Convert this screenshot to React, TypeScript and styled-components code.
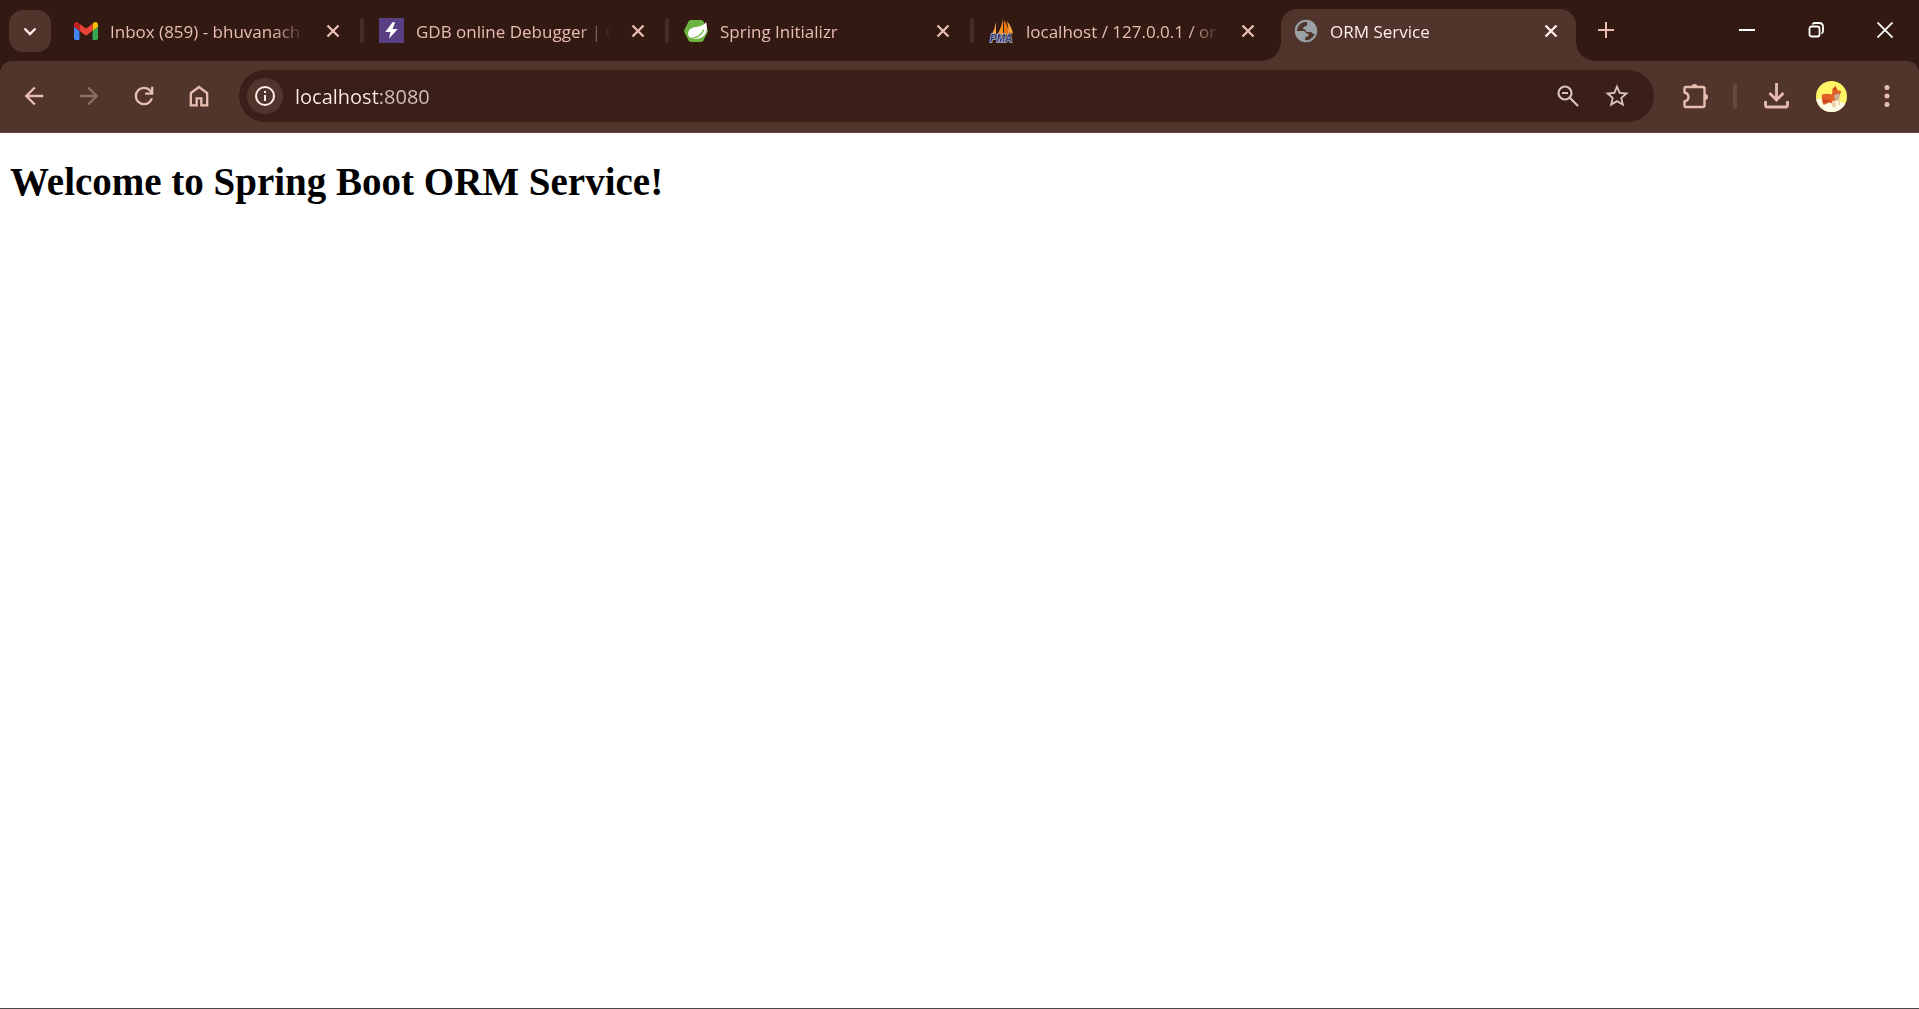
import React, { useState } from 'react';
import styled, { createGlobalStyle } from 'styled-components';

const color = {
  frame: '#321912',
  toolbar: '#51352d',
  field: '#3a1f19',
  accent: '#e7bdb2',
  bright: '#ffede8',
  muted: '#8d6e66',
  soft: '#d8c2bc',
};

const GlobalStyle = createGlobalStyle`
  body { margin: 0; background: #fff; }
  * { box-sizing: border-box; }
  button { border: 0; padding: 0; background: none; color: inherit; font: inherit; }
  svg { display: block; flex: none; }
`;

const Window = styled.div`
  display: flex;
  flex-direction: column;
  min-height: 100vh;
  border-bottom: 1px solid #4a4a4a;
  font-family: 'Open Sans', 'Noto Sans', sans-serif;
`;

const TabStrip = styled.header`
  display: flex;
  height: 61px;
  padding: 9px 0 0 9px;
  background: ${color.frame};
  color: ${color.accent};
`;

const SearchTabs = styled.button`
  display: grid;
  place-items: center;
  flex: none;
  width: 42px;
  height: 42px;
  margin: 1px 10px 0 0;
  border-radius: 14px;
  background: ${color.toolbar};
  color: ${color.bright};
`;

const TabList = styled.div`
  display: flex;
  min-width: 0;
  height: 52px;
`;

const Tab = styled.div<{ $active: boolean }>`
  position: relative;
  display: flex;
  align-items: center;
  flex: 0 1 auto;
  width: 295px;
  min-width: 0;
  padding: 0 ${(p) => (p.$active ? 10 : 8)}px 9px 13px;
  border-radius: 16px 16px 0 0;
  background: ${(p) => (p.$active ? color.toolbar : 'transparent')};
  color: ${(p) => (p.$active ? color.bright : color.accent)};

  &::before,
  &::after {
    content: ${(p) => (p.$active ? "''" : 'none')};
    position: absolute;
    bottom: 0;
    width: 18px;
    height: 18px;
  }
  &::before {
    right: 100%;
    background: radial-gradient(circle at 0 0, transparent 17px, ${color.toolbar} 18px);
  }
  &::after {
    left: 100%;
    background: radial-gradient(circle at 100% 0, transparent 17px, ${color.toolbar} 18px);
  }
`;

const TabDivider = styled.span<{ $hidden: boolean }>`
  flex: none;
  width: 4px;
  height: 25px;
  margin: 9px 2px 0 4px;
  border-radius: 2px;
  background: ${(p) => (p.$hidden ? 'transparent' : '#472c25')};
`;

const TabTitle = styled.button`
  flex: 1;
  min-width: 0;
  margin-left: 12px;
  padding-top: 2px;
  overflow: hidden;
  white-space: nowrap;
  text-align: left;
  font-size: 17px;
  line-height: 24px;
  mask-image: linear-gradient(to right, #000 calc(100% - 32px), transparent);
`;

const CloseTab = styled.button`
  display: grid;
  place-items: center;
  width: 30px;
  height: 30px;
  margin-left: 12px;
`;

const NewTab = styled.button`
  display: grid;
  place-items: center;
  width: 42px;
  height: 42px;
  margin-left: 9px;
`;

const WindowControls = styled.div`
  display: flex;
  margin-left: auto;
  color: #fff;
`;

const WindowButton = styled.button`
  display: grid;
  place-items: center;
  width: 69px;
  height: 42px;
`;

const ToolbarBack = styled.div`
  background: ${color.frame};
`;

const Toolbar = styled.nav`
  display: flex;
  align-items: center;
  height: 72px;
  padding: 0 5px 1px 6px;
  border-bottom: 1px solid #5f4740;
  border-radius: 12px 12px 0 0;
  background: ${color.toolbar};
  color: ${color.accent};
`;

const ToolButton = styled.button<{ $dim?: boolean }>`
  display: grid;
  place-items: center;
  width: 55px;
  height: 42px;
  color: ${(p) => (p.$dim ? color.muted : 'inherit')};
`;

const ToolDivider = styled.span`
  width: 4px;
  height: 25px;
  margin: 0 12px 0 11px;
  border-radius: 2px;
  background: #69483f;
`;

const AddressBar = styled.form`
  display: flex;
  align-items: center;
  flex: 1;
  min-width: 0;
  height: 52px;
  margin: 0 13px;
  padding: 0 13px 0 8px;
  border-radius: 26px;
  background: ${color.field};
  color: ${color.soft};
`;

const SiteInfo = styled.button`
  display: grid;
  place-items: center;
  width: 36px;
  height: 36px;
  border-radius: 50%;
  background: ${color.toolbar};
  color: ${color.bright};
`;

const Address = styled.input`
  flex: 1;
  min-width: 0;
  height: 32px;
  margin-left: 12px;
  padding: 0;
  border: 0;
  outline: 0;
  background: linear-gradient(to right, ${color.bright} 84px, ${color.soft} 84px);
  background-clip: text;
  -webkit-text-fill-color: transparent;
  font: 20px 'Open Sans', 'Noto Sans', sans-serif;
`;

const FieldButton = styled.button`
  display: grid;
  place-items: center;
  width: 49px;
  height: 42px;
`;

const Page = styled.main`
  flex: 1;
  padding: 0 10px;
  background: #fff;
`;

const Heading = styled.h1`
  margin: 26px 0;
  color: #000;
  font: bold 39px/46px 'Liberation Serif', serif;
`;

const Icon = ({ d, size = 28 }: { d: string; size?: number }) => (
  <svg width={size} height={size} viewBox="0 0 24 24" fill="currentColor" aria-hidden="true">
    <path d={d} />
  </svg>
);

const Line = ({ d, w, size = 16 }: { d: string; w: number; size?: number }) => (
  <svg width={size} height={size} viewBox={`0 0 ${size} ${size}`} fill="none" stroke="currentColor" strokeWidth={w} aria-hidden="true">
    <path d={d} />
  </svg>
);

const paths = {
  back: 'm7.825 13 5.6 5.6L12 20l-8-8 8-8 1.425 1.4-5.6 5.6H20v2Z',
  forward: 'm16.175 13-5.6 5.6L12 20l8-8-8-8-1.425 1.4 5.6 5.6H4v2Z',
  reload:
    'M12 20q-3.35 0-5.675-2.325T4 12t2.325-5.675T12 4q1.725 0 3.3.713T18 6.75V4h2v7h-7V9h4.2q-.8-1.4-2.187-2.2T12 6Q9.5 6 7.75 7.75T6 12t1.75 4.25T12 18q1.925 0 3.475-1.1T17.65 14h2.1q-.7 2.65-2.85 4.325T12 20Z',
  home: 'M6 19h3v-6h6v6h3v-9l-6-4.5L6 10v9Zm-2 2V9l8-6 8 6v12h-7v-6h-2v6H4Z',
  star: 'M22 9.24l-7.19-.62L12 2 9.19 8.63 2 9.24l5.46 4.73L5.82 21 12 17.27 18.18 21l-1.63-7.03L22 9.24zM12 15.4l-3.76 2.27 1-4.28-3.32-2.88 4.38-.38L12 6.1l1.71 4.04 4.38.38-3.32 2.88 1 4.28L12 15.4z',
};

const GmailIcon = () => (
  <svg width="24" height="24" viewBox="52 31 88 88" aria-hidden="true">
    <path fill="#4285f4" d="M58 108h14V74L52 59v43c0 3.32 2.69 6 6 6" />
    <path fill="#34a853" d="M120 108h14c3.32 0 6-2.69 6-6V59l-20 15" />
    <path fill="#fbbc04" d="M120 48v26l20-15v-8c0-7.42-8.47-11.65-14.4-7.2" />
    <path fill="#ea4335" d="M72 74V48l24 18 24-18v26L96 92" />
    <path fill="#c5221f" d="M52 51v8l20 15V48l-5.6-4.2c-5.94-4.45-14.4-.22-14.4 7.2" />
  </svg>
);

const BoltIcon = () => (
  <svg width="25" height="25" viewBox="0 0 24 24" aria-hidden="true">
    <path fill="#5a3f85" d="M0 0h24v24H0z" />
    <path fill="#fff" d="M13 4 6 13.5h5L9.500 20 18 10.500h-5L15.500 4Z" />
  </svg>
);

const SpringIcon = () => (
  <svg width="24" height="24" viewBox="0 0 24 24" aria-hidden="true">
    <path fill="#6db33f" d="M7 1h10q1.500 0 2.300 1.300L23.500 10.500q.7 1.500 0 3L19.300 21.700Q18.500 23 17 23H7q-1.500 0-2.300-1.300L.5 13.500q-.7-1.500 0-3L4.700 2.300Q5.500 1 7 1Z" />
    <path fill="#fff" d="M22 3c2 7 .8 13-4.500 15.500-3.500 1.800-7.500 1.500-11 1C3.500 17 3.200 13 6 10.300 9.500 7 18.500 9 22 3Z" />
    <path fill="none" stroke="#6db33f" strokeWidth="1.300" d="M5.500 19.600C12 19.300 17.500 16 20 10.500" />
    <circle cx="5.500" cy="19.500" r="1.200" fill="#6db33f" />
  </svg>
);

const PmaIcon = () => (
  <svg width="25" height="25" viewBox="0 0 25 25" aria-hidden="true">
    <path fill="#f9a03c" d="M7 4v13H2.500Q6 11 7 4Z" />
    <path fill="#f7931e" d="M14 0v17H8Q13 9 14 0Z" />
    <path fill="#e2730f" d="M15 2q5 6 4 15h-4Z" />
    <path fill="#f9a03c" d="M18 3q5 6 6 13-3-2-5-1 1-6-1-12Z" />
    <text x="1" y="24" fontFamily="Liberation Sans, sans-serif" fontSize="10" fontWeight="bold" fontStyle="italic" fill="#34386e" stroke="#b9bbd0" strokeWidth="1.400" paintOrder="stroke">PMA</text>
  </svg>
);

const GlobeIcon = () => (
  <svg width="24" height="24" viewBox="0 0 24 24" aria-hidden="true">
    <circle cx="12" cy="12" r="10.200" fill="none" stroke="#9aa0a6" strokeWidth="2" />
    <path fill="#9aa0a6" d="M14 1.500C19 2.500 22.500 7 22.500 12c0 1-.2 2-.5 3-2 .3-4-.3-4.500-2h-4c-1.500 0-2-1-2-2.500H9.500c-.8-1.500 0-3 1.500-3.300 1.500 0 2-.7 2-1.700 0-1.500.3-2.500 1-4ZM1.500 12h7.500c2 0 3 1 3 2.500h2.500c.5 2-.5 3-2 3.300-1 .2-1.500 1-1.500 2V22.500C6 22 1.500 18 1.500 12Z" />
  </svg>
);

const AvatarIcon = () => (
  <svg width="31" height="31" viewBox="0 0 31 31" aria-hidden="true">
    <clipPath id="avatar-clip"><circle cx="15.500" cy="15.500" r="15.500" /></clipPath>
    <g clipPath="url(#avatar-clip)">
      <path fill="#fff566" d="M0 0h31v31H0z" />
      <path fill="#fffde7" d="M0 18q15-1 31 5v8H0Z" />
      <path fill="#e3602a" d="M6 13.500q5-1.500 10 0l.5-5.500L19.500 5l2 4 4 1.500-2 3.500-3 2-1 5-3 1.500-4-1-3 2H7Q5 18 6 13.500Z" />
      <path fill="#c9461c" d="M16.500 9l3-4 .8 4ZM7 18l8 2-5 2-3-1Z" />
      <path fill="#c9ae94" d="M18 14.500l4-2 2 1-1 6h-3l-1.500-2Z" />
      <path fill="#ecd3ae" d="M16 20l4-1v7l-2 1-2-2ZM22 18h2v6h-2Z" />
    </g>
  </svg>
);

const tabs = [
  { title: 'Inbox (859) - bhuvanach', icon: <GmailIcon /> },
  { title: 'GDB online Debugger | C', icon: <BoltIcon /> },
  { title: 'Spring Initializr', icon: <SpringIcon /> },
  { title: 'localhost / 127.0.0.1 / or', icon: <PmaIcon /> },
  { title: 'ORM Service', icon: <GlobeIcon /> },
];

export default function App() {
  const [active, setActive] = useState(4);
  const [url, setUrl] = useState('localhost:8080');
  return (
    <>
      <GlobalStyle />
      <Window>
        <TabStrip>
          <SearchTabs aria-label="Search tabs">
            <Line d="M2.500 5.500 8 11l5.500-5.500" w={2.4} />
          </SearchTabs>
          <TabList>
            {tabs.map((tab, i) => (
              <React.Fragment key={tab.title}>
                {i > 0 && <TabDivider $hidden={i === active || i - 1 === active} />}
                <Tab $active={i === active}>
                  {tab.icon}
                  <TabTitle onClick={() => setActive(i)}>{tab.title}</TabTitle>
                  <CloseTab aria-label={`Close ${tab.title}`}>
                    <Line d="m2.500 2.500 11 11m0-11-11 11" w={2.4} />
                  </CloseTab>
                </Tab>
              </React.Fragment>
            ))}
          </TabList>
          <NewTab aria-label="New tab">
            <Line d="M8 0v16M0 8h16" w={2} />
          </NewTab>
          <WindowControls>
            <WindowButton aria-label="Minimize"><Line d="M0 8h16" w={2} /></WindowButton>
            <WindowButton aria-label="Restore">
              <Line d="M3.500 4.500h6a2 2 0 0 1 2 2v6a2 2 0 0 1-2 2h-6a2 2 0 0 1-2-2v-6a2 2 0 0 1 2-2ZM4.500 2.500Q5 1 7 1h4q4 0 4 4v4q0 2-1.500 2.500" w={1.8} />
            </WindowButton>
            <WindowButton aria-label="Close"><Line d="m.5.5 15 15m0-15-15 15" w={1.8} /></WindowButton>
          </WindowControls>
        </TabStrip>
        <ToolbarBack>
          <Toolbar>
            <ToolButton aria-label="Back"><Icon d={paths.back} /></ToolButton>
            <ToolButton aria-label="Forward" $dim><Icon d={paths.forward} /></ToolButton>
            <ToolButton aria-label="Reload"><Icon d={paths.reload} /></ToolButton>
            <ToolButton aria-label="Home"><Icon d={paths.home} /></ToolButton>
            <AddressBar onSubmit={(e) => e.preventDefault()}>
              <SiteInfo type="button" aria-label="View site information">
                <svg width="20" height="20" viewBox="0 0 20 20" fill="none" stroke="currentColor" strokeWidth="2" aria-hidden="true">
                  <circle cx="10" cy="10" r="9" />
                  <path d="M10 9v6M10 5v2" />
                </svg>
              </SiteInfo>
              <Address aria-label="Address" value={url} onChange={(e) => setUrl(e.target.value)} />
              <FieldButton type="button" aria-label="Zoom">
                <svg width="22" height="22" viewBox="0 0 22 22" fill="none" stroke="currentColor" strokeWidth="2.200" aria-hidden="true">
                  <circle cx="8" cy="8" r="6.500" />
                  <path d="m12.500 12.500 8.500 8.500M5 8h6" />
                </svg>
              </FieldButton>
              <FieldButton type="button" aria-label="Bookmark this page"><Icon d={paths.star} /></FieldButton>
            </AddressBar>
            <ToolButton aria-label="Extensions">
              <svg width="28" height="28" viewBox="0 0 28 28" fill="none" stroke="currentColor" strokeWidth="2.400" aria-hidden="true">
                <path strokeLinejoin="round" d="M5 5h17q1.500 0 1.500 1.500v17q0 1.500-1.500 1.500H5q-1.500 0-1.500-1.500v-4q4-1 4-4.500t-4-4.500v-4Q3.500 5 5 5Z" />
                <path fill="currentColor" stroke="none" d="M10.500 5a3 3 0 0 1 6 0ZM24 12a3 3 0 0 1 0 6Z" />
              </svg>
            </ToolButton>
            <ToolDivider />
            <ToolButton aria-label="Downloads">
              <svg width="26" height="26" viewBox="0 0 26 26" fill="none" stroke="currentColor" strokeWidth="2.800" aria-hidden="true">
                <path d="M12.500 0v17M5.500 10l7 7 7-7M1.500 18v4q0 2 2 2h18q2 0 2-2v-4" />
              </svg>
            </ToolButton>
            <ToolButton aria-label="Profile"><AvatarIcon /></ToolButton>
            <ToolButton aria-label="Menu">
              <svg width="6" height="24" viewBox="0 0 6 24" fill="currentColor" aria-hidden="true">
                <circle cx="3" cy="3.500" r="2.500" /><circle cx="3" cy="12" r="2.500" /><circle cx="3" cy="20.500" r="2.500" />
              </svg>
            </ToolButton>
          </Toolbar>
        </ToolbarBack>
        <Page>
          <Heading>Welcome to Spring Boot ORM Service!</Heading>
        </Page>
      </Window>
    </>
  );
}
